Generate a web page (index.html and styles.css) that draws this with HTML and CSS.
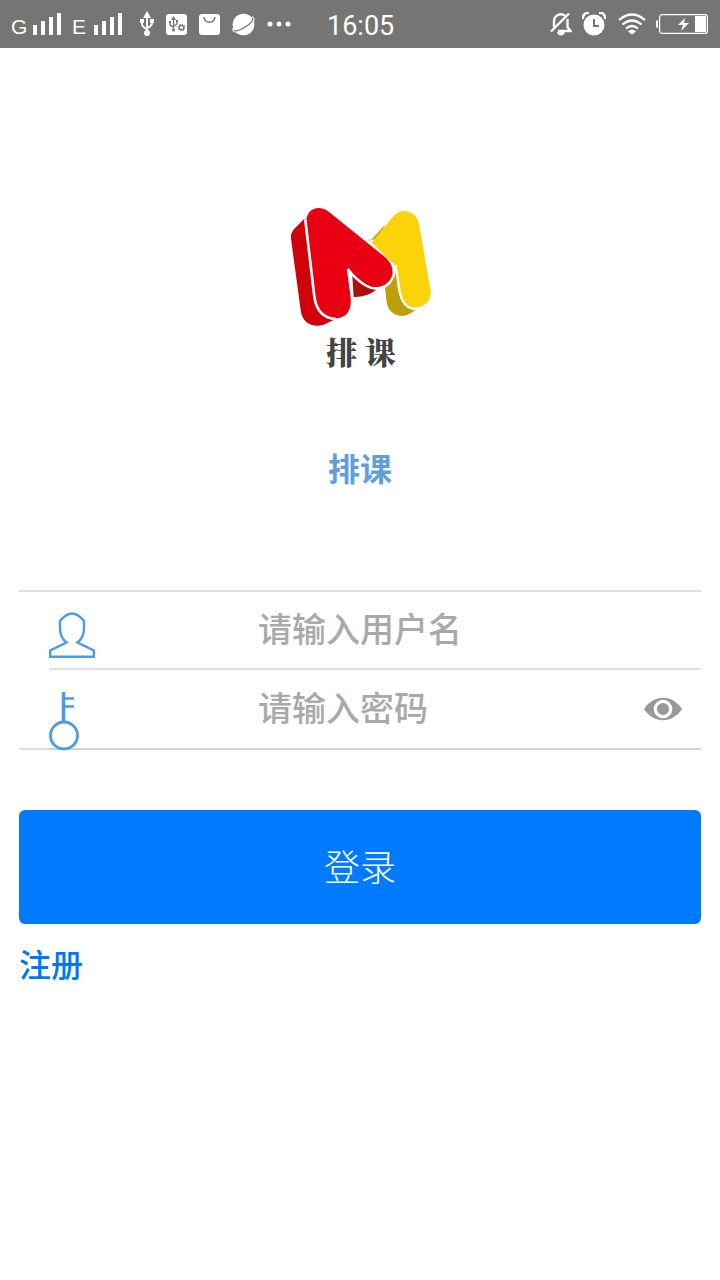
FILE: index.html
```html
<!DOCTYPE html>
<html lang="zh-CN">
<head>
<meta charset="utf-8">
<meta name="viewport" content="width=device-width, initial-scale=1">
<title>排课</title>
<link rel="stylesheet" href="styles.css">
</head>
<body>
<header class="status">
  <div class="status-left">
    <span class="net">G</span>
    <svg class="bars" width="28" height="22" viewBox="0 0 28 22" fill="currentColor"><path d="M0 12h4v10H0zM8 8h4v14H8zM16 4h4v18h-4zM24 0h4v22h-4z"/></svg>
    <span class="net">E</span>
    <svg class="bars" width="28" height="22" viewBox="0 0 28 22" fill="currentColor"><path d="M0 12h4v10H0zM8 8h4v14H8zM16 4h4v18h-4zM24 0h4v22h-4z"/></svg>
  </div>
  <div class="status-icons">
    <svg width="14" height="26" viewBox="0 0 14 26" fill="none" stroke="currentColor" stroke-width="2"><path d="M7 5v17M2 11v2q0 3 5 5M12 10v2q0 3-5 5"/><path d="M7 0l4 7H3zM0 8h4v4H0zM10 8h4v4h-4z" fill="currentColor" stroke="none"/><circle cx="7" cy="22" r="3" fill="currentColor" stroke="none"/></svg>
    <svg width="21" height="21" viewBox="0 0 21 21"><rect width="21" height="21" rx="3" fill="currentColor"/><g fill="none" stroke="#757573" stroke-width="1.3"><path d="M7.500 4v13M4 8v2q0 2 3.500 3M11 7v2q0 2-3.500 3"/><circle cx="15.500" cy="13.500" r="2.200"/><circle cx="15.500" cy="13.500" r="3.200" stroke-dasharray="1.200 1.300"/></g><path d="M7.500 2l2.500 4H5zM3 7h2v2H3zM10 6h2v2h-2z" fill="#757573"/><circle cx="7.500" cy="16" r="1.500" fill="#757573"/></svg>
    <svg width="21" height="21" viewBox="0 0 21 21"><rect width="21" height="21" rx="3" fill="currentColor"/><path d="M5 3c1 7 10 7 11 0" fill="none" stroke="#757573" stroke-width="1.500"/></svg>
    <svg width="23" height="23" viewBox="0 0 23 23"><circle cx="11.500" cy="11.500" r="10.800" fill="currentColor"/><path d="M2 14C-2 21 7 19 14 15 21 11 24 5 20 4" fill="none" stroke="currentColor" stroke-width="1.500"/><path d="M1.500 17.500c3 1 8-1 12.500-4 4-2.500 7-5 7-9" fill="none" stroke="#757573" stroke-width="1.300"/></svg>
    <svg width="24" height="6" viewBox="0 0 24 6" fill="currentColor"><circle cx="3" cy="3" r="2.500"/><circle cx="12" cy="3" r="2.500"/><circle cx="21" cy="3" r="2.500"/></svg>
  </div>
  <time class="clock">16:05</time>
  <div class="status-right">
    <svg width="22" height="24" viewBox="0 0 22 24" fill="none" stroke="currentColor" stroke-width="2.400"><path d="M4 15V9a7 7 0 0 1 11-5.500M17.500 7v8l3 4H8M1 19.500L19 1.500"/><path d="M7 20h8q-1 3.500-4 3.500T7 20z" fill="currentColor" stroke="none"/></svg>
    <svg width="24" height="24" viewBox="0 0 24 24"><circle cx="12" cy="13" r="10.500" fill="currentColor"/><path d="M1 7a5 5 0 0 1 6-6M17 1a5 5 0 0 1 6 6" fill="none" stroke="currentColor" stroke-width="2.500"/><path d="M12 7v7h5" fill="none" stroke="#757573" stroke-width="2"/></svg>
    <svg class="wifi" width="28" height="22" viewBox="0 0 28 22" fill="none" stroke="currentColor" stroke-width="2.200"><path d="M1 7q13-11 26 0M4.500 11.500q9.500-8 19 0M8 15.500q6-5 12 0"/><path d="M14 21.500l-4-3q4-4 8 0z" fill="currentColor" stroke="none"/></svg>
    <svg width="52" height="20" viewBox="0 0 52 20"><rect x="3.600" y=".6" width="47.800" height="18.800" rx="2.500" fill="none" stroke="currentColor" stroke-width="1.200"/><path d="M2 6v8q-2 0-2-2V8q0-2 2-2zM39 2h11v16H39zM29 4l-7 7h5l-2 6 8-8h-5z" fill="currentColor"/></svg>
  </div>
</header>
<main class="page">
  <div class="logo">
    <svg width="160" height="128" viewBox="0 0 480 384">
      <path d="M263 122L318 64 300 115z" fill="#c6a70b"/>
      <path d="M345 202L315 265l5 42c5 34 38 49 66 36l22-13q-38-20-46-60z" fill="#bd9f09"/>
      <path d="M275 128L340 49c27-30 70-15 77 23l35 201c6 52-66 66-85 27-14-26-11-66-21-103z" fill="#fad30b"/>
      <path d="M217 228l4 63q41 1 71-24z" fill="#a91206"/>
      <path d="M73 56L43 86q-12 13-10 30l29 215c5 40 37 53 69 43l38-18q-50-2-58-58z" fill="#cf020c"/>
      <path d="M79 69c-2-42 36-57 67-34l165 133c29 24 34 49 17 73-17 25-48 25-73 10q-31-20-51-47l8 91c3 41-15 58-45 60-32 3-56-19-61-57z" fill="#e80012"/>
      <path d="M76 60L103 289c6 47 30 66 65 68" fill="none" stroke="#fff" stroke-width="8"/>
      <path d="M215 287l-11-80q20 29 51 48c28 18 61 12 77-11 13-18 13-37 5-53" fill="none" stroke="#fff" stroke-width="7"/>
      <path d="M346 197c10 37 7 77 21 103q12 26 42 28M269 119l52-56" fill="none" stroke="#fff" stroke-width="7"/>
    </svg>
    <span class="logo-text">排 课</span>
  </div>
  <h1 class="title">排课</h1>
  <form class="login">
    <div class="fields">
      <div class="field">
        <label for="user" aria-label="用户名">
          <svg width="46" height="46" viewBox="0 0 46 46" fill="none" stroke="#4b9be6" stroke-width="2.400"><path d="M1.200 44.800v-6.300L17.500 30.500q-6.500-5-6.500-14V9Q23-6 35 9v7.500q0 9-6.500 14l16.300 8v6.300z"/></svg>
        </label>
        <input id="user" type="text" placeholder="请输入用户名">
      </div>
      <div class="field">
        <label for="pass" aria-label="密码">
          <svg width="30" height="58" viewBox="0 0 30 58" fill="none" stroke="#4b9be6"><circle cx="15" cy="43.500" r="13.500" stroke-width="2.800"/><path d="M14.500 0v30" stroke-width="3.600"/><path d="M15 6.500h10M15 14.500h10" stroke-width="2.600"/></svg>
        </label>
        <input id="pass" type="password" placeholder="请输入密码">
        <button class="reveal" type="button" aria-label="显示密码">
          <svg width="40" height="24" viewBox="0 0 40 24"><path d="M1 12C11-3 29-3 39 12 29 27 11 27 1 12z" fill="#999"/><circle cx="20" cy="12" r="7.700" fill="#999" stroke="#fff" stroke-width="3.200"/></svg>
        </button>
      </div>
    </div>
    <button class="submit" type="submit">登录</button>
  </form>
  <a class="register" href="#">注册</a>
</main>
</body>
</html>
```
FILE: styles.css
```css
* {
  box-sizing: border-box;
}

body {
  margin: 0;
  background: #fff;
  font-family: "Noto Sans CJK SC", sans-serif;
}

svg {
  display: block;
  flex: none;
}

input,
button {
  border: 0;
  padding: 0;
  background: none;
  font: inherit;
}

.status {
  display: flex;
  align-items: center;
  height: 48px;
  padding: 0 12px 0 11px;
  background: #757573;
  color: #fff;
}

.status-left,
.status-icons,
.status-right {
  display: flex;
  align-items: center;
}

.status-left {
  gap: 7px;
}

.net {
  width: 15px;
  padding-top: 6px;
  font: 21px/24px "Liberation Sans", sans-serif;
}

.net + .bars {
  margin-right: 4px;
}

.status-icons {
  gap: 12px;
  margin-left: 14px;
}

.clock {
  margin-left: 36px;
  padding-top: 4px;
  font: 27px/32px Roboto, sans-serif;
}

.status-right {
  gap: 10px;
  margin-left: auto;
}

.wifi {
  margin-left: 2px;
}

.page {
  padding: 152px 19px 0;
}

.logo {
  display: flex;
  flex-direction: column;
  align-items: center;
}

.logo-text {
  padding-left: 2px;
  color: #444;
  font-family: "Noto Serif CJK SC", "Noto Sans CJK SC", serif;
  font-size: 31px;
  font-weight: 900;
  line-height: 46px;
}

.title {
  margin: 69px 0 99px;
  color: #629fd9;
  font-size: 32px;
  font-weight: 700;
  line-height: 48px;
  text-align: center;
}

.fields {
  border: solid #e0e0e0;
  border-width: 2px 0;
}

.field {
  display: flex;
  align-items: center;
  height: 78px;
  margin-left: 30px;
  border-bottom: 2px solid #e0e0e0;
}

.field:last-child {
  height: 80px;
  margin-bottom: -2px;
  border-color: #d4d4d4;
}

.field label {
  flex: none;
  align-self: flex-start;
  width: 209px;
  padding-top: 20px;
}

.field:last-child label {
  padding-top: 22px;
}

.field input {
  flex: 1;
  min-width: 0;
  height: 60px;
  padding-bottom: 6px;
  color: #333;
  font-size: 34px;
  font-weight: 500;
  outline: 0;
}

.field input::placeholder {
  color: #a9a9a9;
  opacity: 1;
}

.reveal {
  margin-right: 18px;
}

.submit {
  display: block;
  width: 100%;
  margin-top: 60px;
  padding: 28px 0 32px;
  border-radius: 6px;
  background: #007aff;
  color: #fff;
  font-size: 36px;
  font-weight: 300;
  line-height: 54px;
}

.register {
  display: inline-block;
  margin-top: 15px;
  color: #0079f0;
  font-size: 32px;
  font-weight: 500;
  line-height: 48px;
  text-decoration: none;
}
```
